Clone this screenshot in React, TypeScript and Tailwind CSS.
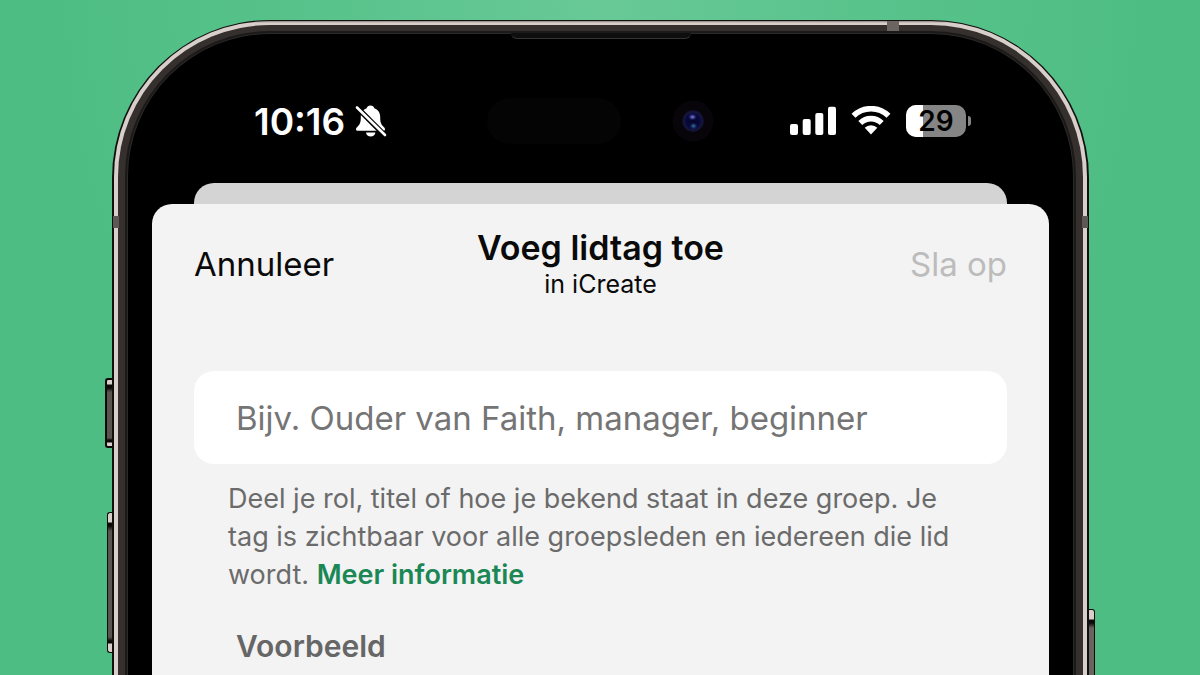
import { useState } from 'react';

function SilentBell() {
  return (
    <svg className="w-8 h-8" viewBox="0 0 32 32" fill="#fff" aria-hidden="true">
      <path d="M15.500 .4c-2 0-3.500 1.200-3.900 2.900C7.500 4.800 5.800 8.200 5.800 12.200c0 4.800-.8 7-2.900 9.100-1.300 1.300-1.900 2-1.900 2.900 0 1.100.8 1.600 2.100 1.600h24.800c1.300 0 2.100-.5 2.100-1.600 0-.9-.6-1.600-1.900-2.900-2.100-2.100-2.900-4.300-2.900-9.100 0-4-1.700-7.400-5.800-8.900C19 1.600 17.500 .4 15.500 .4z" />
      <path d="M11 27.400h9.400c-.3 2.500-2.300 4.100-4.700 4.100S11.300 29.900 11 27.400z" />
      <path d="M0 .5 32 32.500" stroke="#000" strokeWidth="5.400" />
      <path d="M2 2.500 30 30" stroke="#fff" strokeWidth="2.600" strokeLinecap="round" />
    </svg>
  );
}

function SignalBars() {
  return (
    <svg className="w-[46px] h-[30px]" viewBox="0 0 46 30" fill="#fff" aria-hidden="true">
      <rect x="0" y="18" width="8" height="11" rx="2" />
      <rect x="12.700" y="13" width="8" height="16" rx="2" />
      <rect x="25.300" y="7" width="8" height="22" rx="2" />
      <rect x="38" y="0.700" width="8" height="28.300" rx="2" />
    </svg>
  );
}

function Wifi() {
  return (
    <svg className="w-10 h-[30px]" viewBox="0 0 40 30" aria-hidden="true">
      <g fill="none" stroke="#fff" strokeWidth="5.600">
        <path d="M2.500 9.800a25 25 0 0 1 35 0" />
        <path d="M9.300 17a15.300 15.300 0 0 1 21.400 0" />
      </g>
      <path d="M13.700 21.800a9 9 0 0 1 12.600 0L20 28.600z" fill="#fff" />
    </svg>
  );
}

function Battery({ level }: { level: number }) {
  return (
    <div className="flex items-center gap-0.5">
      <div className="relative w-[60px] h-8 rounded-[10px] bg-[#858585] overflow-hidden flex items-center justify-center">
        <div className="absolute inset-y-0 left-0 bg-white" style={{ width: `${level}%` }} />
        <span className="relative text-[28px] leading-8 font-semibold text-black">{level}</span>
      </div>
      <div className="w-[3px] h-[10px] rounded-r-full bg-[#858585]" />
    </div>
  );
}

function SensorArea() {
  return (
    <svg className="w-[228px] h-[46px]" viewBox="0 0 228 46" aria-hidden="true">
      <defs>
        <radialGradient id="lens">
          <stop offset="0" stopColor="#05052a" />
          <stop offset="0.600" stopColor="#08083a" />
          <stop offset="0.850" stopColor="#16163f" />
          <stop offset="1" stopColor="#0b0b1c" />
        </radialGradient>
        <radialGradient id="glint">
          <stop offset="0" stopColor="#8f8ff0" />
          <stop offset="1" stopColor="#2a2a9a" stopOpacity="0" />
        </radialGradient>
        <radialGradient id="glintLow">
          <stop offset="0" stopColor="#3f7fb0" />
          <stop offset="1" stopColor="#123a70" stopOpacity="0" />
        </radialGradient>
      </defs>
      <rect width="134" height="46" rx="23" fill="#040404" />
      <circle cx="206" cy="23" r="20.500" fill="#070509" />
      <circle cx="206" cy="23" r="11" fill="url(#lens)" />
      <ellipse cx="205.500" cy="19" rx="4.500" ry="3.500" fill="url(#glint)" />
      <ellipse cx="206.500" cy="28" rx="4" ry="3.500" fill="url(#glintLow)" />
    </svg>
  );
}

function StatusBar() {
  return (
    <div className="grid grid-cols-[1fr_auto_1fr] items-center px-[78px] h-[46px] text-white">
      <div className="flex items-center gap-2.5 pl-6">
        <span className="text-[37px] leading-none font-semibold">10:16</span>
        <SilentBell />
      </div>
      <SensorArea />
      <div className="flex items-center justify-end gap-[15px]">
        <SignalBars />
        <Wifi />
        <Battery level={29} />
      </div>
    </div>
  );
}

function MemberTagSheet() {
  const [tag, setTag] = useState('');

  return (
    <section className="flex-1 rounded-t-[20px] bg-[#f3f3f3] px-[42px] pt-6">
      <header className="grid grid-cols-[1fr_auto_1fr] items-center h-[70px]">
        <button type="button" className="justify-self-start text-[33px] leading-10 text-[#0a0a0a]">
          Annuleer
        </button>
        <div className="text-center text-[#0a0a0a]">
          <h1 className="text-[34px] leading-10 font-semibold">Voeg lidtag toe</h1>
          <p className="text-[25px] leading-8">in iCreate</p>
        </div>
        <button
          type="button"
          disabled={!tag}
          className="justify-self-end text-[33px] leading-10 text-[#0a0a0a] disabled:text-[#bcbcbc]"
        >
          Sla op
        </button>
      </header>

      <input
        type="text"
        aria-label="Lidtag"
        value={tag}
        onChange={(e) => setTag(e.target.value)}
        placeholder="Bijv. Ouder van Faith, manager, beginner"
        className="block w-full h-[93px] mt-[73px] px-[42px] rounded-[20px] bg-white text-[33px] text-[#0a0a0a] placeholder:text-[#757575] outline-none"
      />

      <p className="mt-4 px-[34px] text-[27px] leading-[38px] text-[#6b6b6b]">
        Deel je rol, titel of hoe je bekend staat in deze groep. Je tag is zichtbaar voor alle
        groepsleden en iedereen die lid wordt.{' '}
        <a href="#meer-informatie" className="inline-block font-semibold text-[#1b8755]">Meer informatie</a>
      </p>

      <h2 className="mt-8 px-[42px] text-[30px] leading-10 font-semibold text-[#666666]">Voorbeeld</h2>
    </section>
  );
}

export default function App() {
  return (
    <main className="h-screen overflow-hidden pt-5 pl-28 pr-[111px] font-['Inter',sans-serif] bg-[radial-gradient(ellipse_at_50%_0%,#68c996_0%,#56c28a_38%,#4ebd83_65%)]">
      <div className="relative h-full">
        {/* Side buttons */}
        <div className="absolute -left-[7px] top-[358px] w-2 h-[70px] rounded-l-[3px] border-2 border-r-0 border-[#0c0a09] bg-[linear-gradient(#d8cfca_0_4px,#0c0a09_5px_8px,#5a5450_12px,#5a5450_58px,#0c0a09_60px_62px,#d8cfca_63px)]" />
        <div className="absolute -left-[5px] top-[492px] w-1.5 h-[141px] rounded-l-[3px] border border-r-0 border-[#0c0a09] bg-[linear-gradient(#d8cfca_0_9px,#0c0a09_10px_13px,#5a5450_18px,#5a5450_124px,#0c0a09_128px_130px,#d8cfca_131px)]" />
        <div className="absolute -right-[6px] top-[589px] w-2 h-[141px] rounded-r-[3px] border border-l-0 border-[#0c0a09] bg-[linear-gradient(#d8cfca_0_9px,#0c0a09_10px_13px,#6a6460_18px)]" />

        {/* Titanium frame */}
        <div className="relative flex flex-col h-full pt-px px-0.5 rounded-t-[158px] bg-[#12100f]">
          <div className="absolute top-px right-[190px] w-3 h-2.5 bg-[#6b6562] z-10" />
          <div className="absolute top-[196px] left-px w-1.5 h-3 bg-[#5d5856] z-10" />
          <div className="absolute top-[196px] right-px w-1.5 h-3 bg-[#5d5856] z-10" />
          <div className="flex-1 flex flex-col pt-1 px-1 rounded-t-[156px] bg-[linear-gradient(#8b827d_0,#d8cfca_2px)]">
            <div className="flex-1 flex flex-col pt-1.5 px-[7px] rounded-t-[152px] bg-[#35302e]">
              <div className="flex-1 flex flex-col pt-0.5 px-0.5 rounded-t-[145px] bg-[#1c1a19]">
                <div className="relative flex-1 flex flex-col rounded-t-[143px] border-t border-x border-[#2b2a29] bg-black px-6">
                  {/* Earpiece */}
                  <div className="absolute -top-px left-1/2 -translate-x-1/2 w-[180px] h-1.5 rounded-b-md bg-[#0e0e0e] border-b border-[#343434]" />
                  <div className="pt-16">
                    <StatusBar />
                  </div>
                  <div className="mx-[42px] mt-[39px] h-[21px] rounded-t-[20px] bg-[#d4d4d4]" />
                  <MemberTagSheet />
                </div>
              </div>
            </div>
          </div>
        </div>
      </div>
    </main>
  );
}
